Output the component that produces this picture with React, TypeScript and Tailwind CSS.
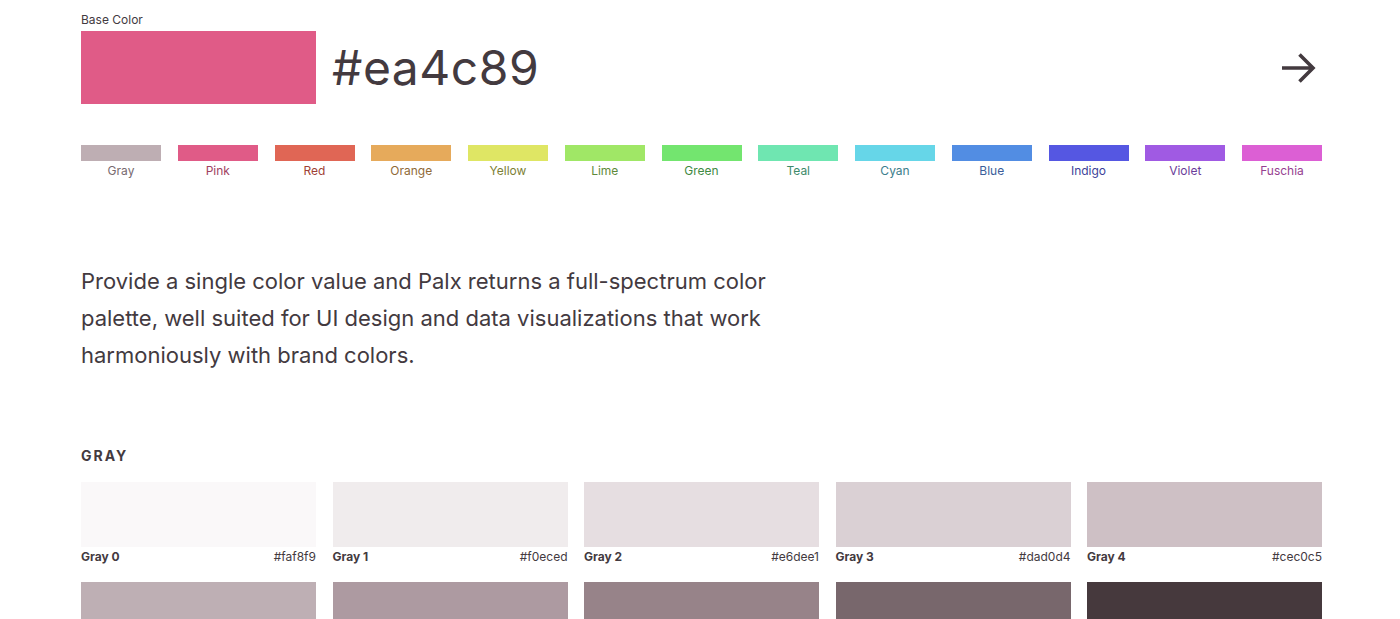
import React from "react";

const hues: { name: string; bg: string; fg: string }[] = [
  { name: "Gray", bg: "#beaeb3", fg: "#776a6f" },
  { name: "Pink", bg: "#e05b87", fg: "#a0415f" },
  { name: "Red", bg: "#e06655", fg: "#9e4136" },
  { name: "Orange", bg: "#e6aa5b", fg: "#8f6a37" },
  { name: "Yellow", bg: "#dfe664", fg: "#7c8035" },
  { name: "Lime", bg: "#a0e766", fg: "#5e8a3a" },
  { name: "Green", bg: "#73e56f", fg: "#408a42" },
  { name: "Teal", bg: "#6fe6b1", fg: "#3d8a6a" },
  { name: "Cyan", bg: "#66d6e8", fg: "#3d7e8c" },
  { name: "Blue", bg: "#528de3", fg: "#3b5e9a" },
  { name: "Indigo", bg: "#5557e2", fg: "#3d3f9a" },
  { name: "Violet", bg: "#a05ae3", fg: "#6a3d9a" },
  { name: "Fuschia", bg: "#dc5fd4", fg: "#963f90" },
];

const grays: { name: string; hex: string }[] = [
  { name: "Gray 0", hex: "#faf8f9" },
  { name: "Gray 1", hex: "#f0eced" },
  { name: "Gray 2", hex: "#e6dee1" },
  { name: "Gray 3", hex: "#dad0d4" },
  { name: "Gray 4", hex: "#cec0c5" },
  { name: "Gray 5", hex: "#beafb4" },
  { name: "Gray 6", hex: "#ad9aa1" },
  { name: "Gray 7", hex: "#978389" },
  { name: "Gray 8", hex: "#78676c" },
  { name: "Gray 9", hex: "#46393d" },
];

export default function App() {
  return (
    <div
      className="min-h-screen bg-white text-[#433a3f] pl-[81px] pr-[78px]"
      style={{ fontFamily: "Inter, 'Noto Sans', sans-serif" }}
    >
      <div className="pt-[13px]">
        <div className="text-[12px] leading-[14px]">Base Color</div>
        <div className="flex items-center mt-[4px]">
          <div className="w-[235px] h-[73px] bg-[#e05b87]" />
          <div className="ml-[16px] text-[48px] leading-none tracking-[0.5px] font-normal">
            #ea4c89
          </div>
          <div className="flex-1" />
          <svg width="36" height="36" viewBox="0 0 36 36" className="mr-[5px]">
            <path d="M1 18 H32 M18.5 4.5 L32 18 L18.5 31.5" stroke="#433a3f" strokeWidth="3.6" fill="none" strokeLinecap="butt" strokeLinejoin="miter" />
          </svg>
        </div>
      </div>

      <div className="grid gap-[16.75px] mt-[41px]" style={{ gridTemplateColumns: "repeat(13, minmax(0, 1fr))" }}>
        {hues.map((h) => (
          <div key={h.name} className="flex flex-col items-center">
            <div className="w-full h-[16px]" style={{ backgroundColor: h.bg }} />
            <div className="text-[12px] leading-[14px] mt-[3px]" style={{ color: h.fg }}>
              {h.name}
            </div>
          </div>
        ))}
      </div>

      <p className="mt-[85px] text-[22px] leading-[37px] max-w-[700px] text-[#433a3f]">
        Provide a single color value and Palx returns a full-spectrum color palette, well suited for UI design and data visualizations that work harmoniously with brand colors.
      </p>

      <h2 className="mt-[74px] text-[14px] leading-[16px] font-bold tracking-[2px]">GRAY</h2>

      <div className="grid grid-cols-5 gap-x-[16.5px] gap-y-[18px] mt-[18px]">
        {grays.map((g) => (
          <div key={g.name}>
            <div className="h-[65px]" style={{ backgroundColor: g.hex }} />
            <div className="flex justify-between text-[12px] leading-[14px] mt-[3px]">
              <span className="font-bold">{g.name}</span>
              <span>{g.hex}</span>
            </div>
          </div>
        ))}
      </div>
    </div>
  );
}
